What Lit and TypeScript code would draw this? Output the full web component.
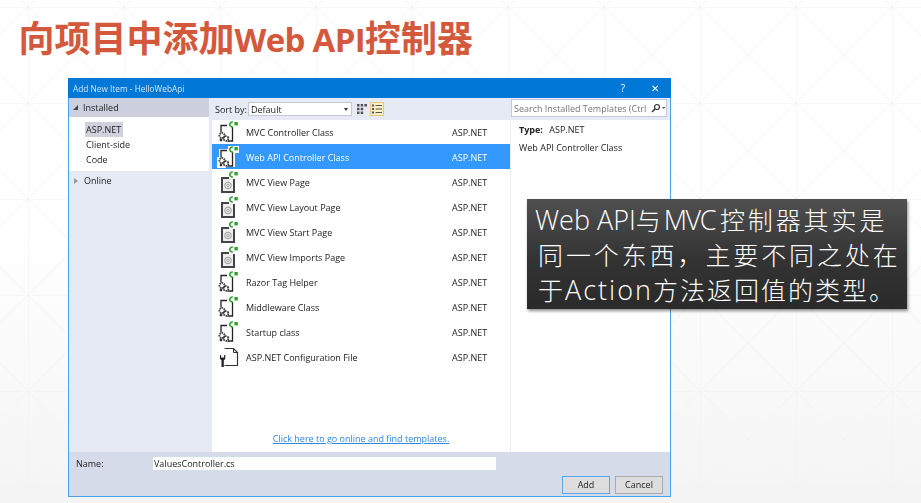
import { LitElement, html, css, svg } from "lit";
import { customElement } from "lit/decorators.js";

type Kind = "cls" | "view" | "cfg";
const ROWS: { name: string; kind: Kind; sel?: boolean }[] = [
  { name: "MVC Controller Class", kind: "cls" },
  { name: "Web API Controller Class", kind: "cls", sel: true },
  { name: "MVC View Page", kind: "view" },
  { name: "MVC View Layout Page", kind: "view" },
  { name: "MVC View Start Page", kind: "view" },
  { name: "MVC View Imports Page", kind: "view" },
  { name: "Razor Tag Helper", kind: "cls" },
  { name: "Middleware Class", kind: "cls" },
  { name: "Startup class", kind: "cls" },
  { name: "ASP.NET Configuration File", kind: "cfg" },
];

const badge = svg`<path d="M16.800 2.300a2.300 2.300 0 1 0 0 4.400" fill="none" stroke="#2fa02f" stroke-width="1.700"/><rect x="18.400" y="2" width="3.400" height="3.400" fill="#2fa02f"/>`;

function icon(kind: Kind, sel?: boolean) {
  if (kind === "cls") {
    return html`<svg class="ic" viewBox="0 0 24 24">
      ${sel ? svg`<path d="M3 4h9V1h11v7h-4v14H10v1H1V12h2z" fill="#fff"/>` : ""}
      <path d="M11 5.500H5v7M16.500 7v14h-5" fill="none" stroke="#222" stroke-width="1.300"/>
      <circle cx="6" cy="15.500" r="2.600" fill="none" stroke="#333" stroke-width="1.800" stroke-dasharray="1.500 .8"/>
      <circle cx="10" cy="18.500" r="2.400" fill="none" stroke="#333" stroke-width="1.800" stroke-dasharray="1.500 .8"/>
      <circle cx="5" cy="20" r="1.400" fill="#333"/>
      ${badge}
    </svg>`;
  }
  if (kind === "view") {
    return html`<svg class="ic" viewBox="0 0 24 24">
      <path d="M13 8H6v14h12V9" fill="#eee" stroke="#444" stroke-width="2"/>
      <circle cx="12" cy="15.500" r="3.300" fill="none" stroke="#999" stroke-width="1"/>
      <circle cx="12" cy="15.500" r="1.300" fill="none" stroke="#999" stroke-width=".9"/>
      ${badge}
    </svg>`;
  }
  return html`<svg class="ic" viewBox="0 0 24 24">
    <path d="M8.500 3.500h9l4 4v13h-13" fill="#fff" stroke="#333" stroke-width="1.200"/>
    <path d="M17.500 3.500v4h4" fill="none" stroke="#333" stroke-width="1"/>
    <path d="M4 10v3.500a2.500 2.500 0 0 0 1.500 1.800V22h2.300v-6.700a2.500 2.500 0 0 0 1.500-1.800V10l-1.200 0v2.500h-3V10z" fill="#222"/>
  </svg>`;
}

@customElement("app-root")
export class AppRoot extends LitElement {
  static styles = css`
    :host {
      display: block;
      position: relative;
      width: 921px;
      height: 503px;
      overflow: hidden;
      font-family: "Open Sans", "Noto Sans", sans-serif;
      background: linear-gradient(#fff 0%, #fff 45%, #f4f4f4 100%);
    }
    .pattern { position: absolute; inset: 0; width: 921px; height: 503px; }
    .page {
      position: relative;
      display: flex;
      flex-direction: column;
      align-items: flex-start;
      height: 503px;
      box-sizing: border-box;
      padding: 10px 0 0 18.500px;
    }
    h1 {
      margin: 0;
      height: 53px;
      line-height: 52px;
      font-family: "Noto Sans CJK SC", sans-serif;
      font-size: 36px;
      font-weight: 700;
      color: #d4583b;
      white-space: nowrap;
    }
    h1 span { font-family: "Open Sans", sans-serif; font-size: 33px; letter-spacing: -0.700px; }
    .dialog {
      margin: 15px 0 0 49.500px;
      width: 603px;
      height: 419px;
      box-sizing: border-box;
      border: 1px solid #4aa3ea;
      border-top: 0;
      display: flex;
      flex-direction: column;
      background: #e6eaf5;
      color: #222;
      font-size: 9px;
      line-height: 15px;
      filter: blur(0.3px);
    }
    .titlebar {
      flex: none;
      height: 20px;
      margin: 0 -1px;
      background: #0078d7;
      color: #d5e8f8;
      display: flex;
      align-items: center;
      padding: 0 0 0 5px;
      font-size: 8.300px;
    }
    .titlebar .t { flex: 1; }
    .titlebar .b { width: 32px; text-align: center; color: #fff; font-size: 10px; }
    .main { flex: 1; display: flex; min-height: 0; }
    .left { width: 140px; flex: none; }
    .inst { height: 19px; background: #ccd0de; display: flex; align-items: center; gap: 5px; padding: 0 0 0 4px; box-sizing: border-box; }
    .tri { width: 0; height: 0; flex: none; }
    .tri.down { border-left: 5px solid transparent; border-bottom: 5px solid #444; }
    .tri.side { border-top: 3.500px solid transparent; border-bottom: 3.500px solid transparent; border-left: 4px solid #999; margin-right: 1px; }
    .tree { height: 54px; background: #fff; padding: 5px 0 0 16px; box-sizing: border-box; }
    .tree div { height: 15px; padding-left: 1px; }
    .tree .on { background: #cfd1dd; width: max-content; padding-right: 2px; }
    .online { height: 19px; display: flex; align-items: center; gap: 5px; padding-left: 5px; }
    .center { width: 298px; flex: none; margin-left: 3px; display: flex; flex-direction: column; }
    .sort { height: 22px; display: flex; align-items: center; padding-left: 3px; flex: none; }
    .sort .lab { width: 33px; }
    .select {
      width: 104px; height: 14px; box-sizing: border-box; background: #fff; border: 1px solid #c4c8d8;
      display: flex; align-items: center; justify-content: space-between; padding: 0 3px 0 2px;
    }
    .select i { width: 0; height: 0; border-left: 2.500px solid transparent; border-right: 2.500px solid transparent; border-top: 3px solid #333; }
    .vbtn { width: 14px; height: 14px; display: flex; align-items: center; justify-content: center; box-sizing: border-box; margin-left: 3px; }
    .vbtn.on { background: #fdf0c4; border: 1px solid #e8c874; margin-left: 1px; }
    .vbtn svg { width: 10px; height: 10px; }
    .list { flex: 1; background: #fff; display: flex; flex-direction: column; position: relative; }
    .row { height: 25px; flex: none; display: flex; align-items: center; box-sizing: border-box; padding-top: 1px; }
    .row:first-child { height: 24px; padding-top: 0; }
    .row.sel { background: #3399ff; color: #fff; }
    .ic { width: 24px; height: 24px; margin: 0 6px 0 4px; flex: none; }
    .row .n { width: 206px; }
    .link { margin-top: auto; height: 21px; text-align: center; color: #2f86e0; text-decoration: underline; }
    .side-panel { flex: 1; display: flex; flex-direction: column; margin-left: 1px; }
    .search {
      flex: none; margin: 1px 3px 3px 0; height: 18px; box-sizing: border-box; background: #fff; border: 1px solid #c4c8d8;
      display: flex; align-items: center; padding-left: 2px; color: #777; white-space: nowrap; overflow: hidden; justify-content: space-between;
    }
    .search svg { width: 16px; height: 10px; flex: none; }
    .info { flex: 1; background: #fff; padding: 2px 8px; box-sizing: border-box; }
    .info b { font-weight: 700; margin-right: 4px; }
    .info p { margin: 3px 0 0; }
    .foot { flex: none; height: 44px; background: #d6dbe9; display: flex; flex-direction: column; padding: 5px 7px 0; box-sizing: border-box; }
    .nm { display: flex; align-items: center; height: 13px; }
    .nm label { width: 77px; }
    .nm .inp { width: 343px; height: 13px; background: #fff; line-height: 13px; padding-left: 1px; box-sizing: border-box; }
    .btns { display: flex; justify-content: flex-end; gap: 5px; margin-top: 6px; }
    .btn { width: 48px; height: 18px; box-sizing: border-box; background: #dddddd; border: 1px solid #aaa; text-align: center; line-height: 16px; }
    .btn.def { border-color: #5aa5ec; }
    .callout {
      position: absolute;
      left: 527px;
      top: 199px;
      width: 380px;
      height: 110px;
      box-sizing: border-box;
      padding: 3px 0 0 8px;
      background: linear-gradient(#505050, #333 55%, #2a2a2a);
      box-shadow: 1px 2px 3px rgba(0,0,0,.45);
      color: #fff;
      font-family: "Noto Sans CJK SC", sans-serif;
      font-weight: 300;
      font-size: 25px;
      line-height: 35px;
      letter-spacing: 2.900px;
      white-space: nowrap;
    }
    .callout span { font-family: "Open Sans", sans-serif; font-size: 27px; letter-spacing: 0; }
    .callout span.mvc { letter-spacing: -1.500px; margin-right: 5px; }
    .callout .l2 { padding-left: 3px; }
    .callout .l3 { letter-spacing: 2px; }
    .callout .l3 span { letter-spacing: 2px; }
  `;

  render() {
    return html`
      <svg class="pattern" aria-hidden="true">
        <defs>
          <pattern id="tile" x="28" y="7" width="96" height="96" patternUnits="userSpaceOnUse">
            <path d="M0 0V96M0 0H96" stroke="#f1f1f1" stroke-width="1.200" fill="none"/>
            <path d="M0 0L96 96M96 0L0 96" stroke="#f3f3f3" stroke-width="1" fill="none"/>
          </pattern>
        </defs>
        <rect width="921" height="503" fill="url(#tile)"/>
      </svg>
      <div class="page">
        <h1>向项目中添加<span>Web API</span>控制器</h1>
        <div class="dialog">
          <div class="titlebar">
            <div class="t">Add New Item - HelloWebApi</div>
            <div class="b">?</div>
            <div class="b">✕</div>
          </div>
          <div class="main">
            <div class="left">
              <div class="inst"><span class="tri down"></span>Installed</div>
              <div class="tree">
                <div class="on">ASP.NET</div>
                <div>Client-side</div>
                <div>Code</div>
              </div>
              <div class="online"><span class="tri side"></span>Online</div>
            </div>
            <div class="center">
              <div class="sort">
                <span class="lab">Sort by:</span>
                <div class="select">Default<i></i></div>
                <div class="vbtn">
                  <svg viewBox="0 0 10 10"><path d="M0 0h2.500v2.500H0zM3.700 0h2.500v2.500H3.700zM7.400 0H10v2.500H7.400zM0 3.700h2.500v2.500H0zM3.700 3.700h2.500v2.500H3.700zM0 7.400h2.500V10H0zM3.700 7.400h2.500V10H3.700z" fill="#555"/></svg>
                </div>
                <div class="vbtn on">
                  <svg viewBox="0 0 10 10"><path d="M0 .5h2v2H0zM0 4h2v2H0zM0 7.500h2v2H0zM3.500 1h6.500v1H3.500zM3.500 4.500h6.500v1H3.500zM3.500 8h6.500v1H3.500z" fill="#555"/></svg>
                </div>
              </div>
              <div class="list">
                ${ROWS.map(
                  (r) => html`<div class="row ${r.sel ? "sel" : ""}">
                    ${icon(r.kind, r.sel)}
                    <span class="n">${r.name}</span><span>ASP.NET</span>
                  </div>`
                )}
                <div class="link">Click here to go online and find templates.</div>
              </div>
            </div>
            <div class="side-panel">
              <div class="search">
                <span>Search Installed Templates (Ctrl</span>
                <svg viewBox="0 0 16 10"><circle cx="7" cy="4" r="2.500" fill="none" stroke="#333" stroke-width="1.200"/><path d="M5 6L2 9" stroke="#333" stroke-width="1.500"/><path d="M12 4h3.500l-1.750 2z" fill="#555"/></svg>
              </div>
              <div class="info">
                <div><b>Type:</b> ASP.NET</div>
                <p>Web API Controller Class</p>
              </div>
            </div>
          </div>
          <div class="foot">
            <div class="nm"><label>Name:</label><div class="inp">ValuesController.cs</div></div>
            <div class="btns"><div class="btn def">Add</div><div class="btn">Cancel</div></div>
          </div>
        </div>
      </div>
      <div class="callout">
        <div><span>Web API</span>与<span class="mvc">MVC</span>控制器其实是</div>
        <div class="l2">同一个东西，主要不同之处在</div>
        <div class="l2 l3">于<span>Action</span>方法返回值的类型。</div>
      </div>
    `;
  }
}
